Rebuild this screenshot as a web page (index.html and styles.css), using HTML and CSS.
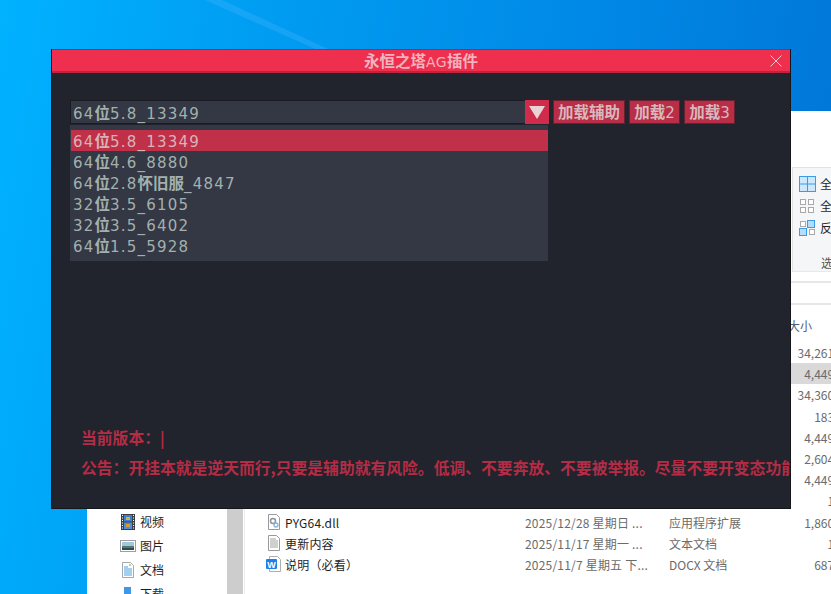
FILE: index.html
```html
<!DOCTYPE html>
<html lang="zh-CN">
<head>
<meta charset="utf-8">
<title>永恒之塔AG插件</title>
<link rel="stylesheet" href="styles.css">
</head>
<body>
<div class="desktop">
  <svg class="streak" width="831" height="80" viewBox="0 0 831 80"><polygon points="205,0 222,0 395,80 385,80" fill="#4fb8ff" opacity=".28"/></svg>

  <section class="explorer">
    <nav class="nav">
      <div class="nav-row">
        <svg class="ico" width="16" height="16" viewBox="0 0 16 16"><rect x="1" y="0" width="14" height="16" fill="#3b3f46"/><rect x="4" y="1" width="8" height="6.5" fill="#3f7fd0"/><rect x="4" y="8.5" width="8" height="6.5" fill="#4a8fe0"/><rect x="6" y="3" width="4" height="3" fill="#d6b23a"/><rect x="6" y="10" width="4" height="3" fill="#d89a30"/><path d="M2 1.5h1M2 4h1M2 6.5h1M2 9h1M2 11.5h1M2 14h1M13 1.5h1M13 4h1M13 6.5h1M13 9h1M13 11.5h1M13 14h1" stroke="#fff"/></svg>
        <span>视频</span>
      </div>
      <div class="nav-row">
        <svg class="ico" width="16" height="16" viewBox="0 0 16 16"><rect x=".5" y="2.5" width="15" height="11" fill="#fff" stroke="#9a9fa6"/><rect x="2" y="4" width="12" height="4" fill="#a7c4d8"/><rect x="2" y="8" width="12" height="2" fill="#4f7c66"/><rect x="2" y="10" width="12" height="2" fill="#2f4a52"/></svg>
        <span>图片</span>
      </div>
      <div class="nav-row">
        <svg class="ico" width="16" height="16" viewBox="0 0 16 16"><path d="M2.500 .5h8l3 3v12h-11z" fill="#fff" stroke="#a5a9ad"/><path d="M4 5h4M4 7h8M4 9h8M4 11h8M4 13h8" stroke="#4a9ee0"/><path d="M9 3h2" stroke="#6aa84f"/></svg>
        <span>文档</span>
      </div>
      <div class="nav-row">
        <svg class="ico" width="16" height="16" viewBox="0 0 16 16"><rect x="4" y="1" width="7" height="15" fill="#3f97e8"/></svg>
        <span>下载</span>
      </div>
    </nav>
    <div class="scrollbar"></div>
    <div class="main">
      <div class="ribbon">
        <div class="rib-item">
          <svg class="ico" width="18" height="16" viewBox="0 0 18 16"><rect x=".5" y=".5" width="16" height="15" fill="#cfe7fb" stroke="#3a9be8"/><path d="M8.500 0v16M0 8h17" stroke="#3a9be8"/></svg>
          <span>全部选择</span>
        </div>
        <div class="rib-item">
          <svg class="ico" width="18" height="16" viewBox="0 0 18 16"><g fill="#fff" stroke="#a9a9a9"><rect x="1.500" y="1.500" width="5" height="5"/><rect x="9.500" y="1.500" width="5" height="5"/><rect x="1.500" y="9.500" width="5" height="5"/><rect x="9.500" y="9.500" width="5" height="5"/></g></svg>
          <span>全部取消</span>
        </div>
        <div class="rib-item">
          <svg class="ico" width="18" height="16" viewBox="0 0 18 16"><rect x="1.500" y="1.500" width="5" height="5" fill="#fff" stroke="#a9a9a9"/><rect x="10.500" y="9.500" width="5" height="5" fill="#fff" stroke="#a9a9a9"/><rect x="8.500" y=".5" width="7" height="7" fill="#b5dcfa" stroke="#3a9be8"/><rect x=".5" y="8.500" width="7" height="7" fill="#b5dcfa" stroke="#3a9be8"/></svg>
          <span>反向选择</span>
        </div>
        <div class="rib-label">选择</div>
      </div>
      <div class="rib-gap"></div>
      <div class="col-head"><span class="size-head">大小</span></div>
      <div class="files">
        <div class="file"><span></span><span></span><span></span><span class="size">34,261 KB</span></div>
        <div class="file sel"><span></span><span></span><span></span><span class="size">4,449 KB</span></div>
        <div class="file"><span></span><span></span><span></span><span class="size">34,360 KB</span></div>
        <div class="file"><span></span><span></span><span></span><span class="size">183 KB</span></div>
        <div class="file"><span></span><span></span><span></span><span class="size">4,449 KB</span></div>
        <div class="file"><span></span><span></span><span></span><span class="size">2,604 KB</span></div>
        <div class="file"><span></span><span></span><span></span><span class="size">4,449 KB</span></div>
        <div class="file"><span></span><span></span><span></span><span class="size">1 KB</span></div>
        <div class="file">
          <span class="fname"><svg class="ico" width="16" height="16" viewBox="0 0 16 16"><path d="M2.500 .5h8l3 3v12h-11z" fill="#fff" stroke="#9a9a9a"/><circle cx="7" cy="7" r="2.500" fill="none" stroke="#8a94a0" stroke-width="1.500"/><circle cx="10" cy="11" r="2" fill="none" stroke="#8ab0d0" stroke-width="1.300"/></svg>PYG64.dll</span>
          <span class="date">2025/12/28 星期日 ...</span><span>应用程序扩展</span><span class="size">1,860 KB</span>
        </div>
        <div class="file">
          <span class="fname"><svg class="ico" width="16" height="16" viewBox="0 0 16 16"><path d="M2.500 .5h8l3 3v12h-11z" fill="#fff" stroke="#9a9a9a"/><path d="M4 4h6M4 6h8M4 8h8M4 10h8M4 12h8" stroke="#a0a0a0"/></svg>更新内容</span>
          <span class="date">2025/11/17 星期一 ...</span><span>文本文档</span><span class="size">1 KB</span>
        </div>
        <div class="file">
          <span class="fname"><svg class="ico" width="16" height="16" viewBox="0 0 16 16"><path d="M3.500 .5h8l3 3v12h-11z" fill="#fff" stroke="#a8b0b8"/><rect x="0" y="3" width="11" height="10" rx="1" fill="#1f7fe8"/><text x="5.500" y="11.500" class="w-mark">W</text></svg>说明（必看）</span>
          <span class="date">2025/11/7 星期五 下...</span><span>DOCX 文档</span><span class="size">687 KB</span>
        </div>
      </div>
    </div>
  </section>

  <section class="app">
    <header class="titlebar">
      <h1 class="title"><b>永恒之塔</b>AG<b>插件</b></h1>
      <svg class="close" width="12" height="12" viewBox="0 0 12 12"><path d="M.5.5l11 11M11.500.5l-11 11" stroke="#f3c9d0" fill="none"/></svg>
    </header>
    <div class="content">
      <div class="toolbar">
        <div class="combo">
          <div class="combo-value">64<b>位</b>5.8_13349</div>
          <div class="combo-arrow"><span class="tri"></span></div>
        </div>
        <button class="btn btn-wide"><b>加载辅助</b></button>
        <button class="btn"><b>加载</b>2</button>
        <button class="btn"><b>加载</b>3</button>
      </div>
      <ul class="list">
        <li class="item active">64<b>位</b>5.8_13349</li>
        <li class="item">64<b>位</b>4.6_8880</li>
        <li class="item">64<b>位</b>2.8<b>怀旧服</b>_4847</li>
        <li class="item">32<b>位</b>3.5_6105</li>
        <li class="item">32<b>位</b>3.5_6402</li>
        <li class="item">64<b>位</b>1.5_5928</li>
      </ul>
      <div class="notes">
        <p class="note">当前版本：|</p>
        <p class="note">公告：开挂本就是逆天而行,只要是辅助就有风险。低调、不要奔放、不要被举报。尽量不要开变态功能</p>
      </div>
    </div>
  </section>
</div>
</body>
</html>
```
FILE: styles.css
```css
* { box-sizing: border-box; }
html, body { margin: 0; padding: 0; width: 831px; height: 594px; overflow: hidden; }
.desktop {
  position: relative;
  width: 831px;
  height: 594px;
  overflow: hidden;
  background: linear-gradient(100deg, #00b2ff 0%, #009cf2 30%, #0088e6 65%, #0072d4 100%);
  font-family: "Noto Sans CJK SC", "Noto Sans", sans-serif;
}
.streak { position: absolute; left: 0; top: 0; }

/* Explorer behind */
.explorer {
  position: absolute;
  left: 87px;
  top: 111px;
  width: 800px;
  height: 483px;
  background: #fff;
  display: flex;
  font-size: 12px;
  color: #1e1e1e;
}
.ico { flex: none; display: block; }
.nav {
  width: 140px;
  flex: none;
  padding: 399px 0 0 33px;
  display: flex;
  flex-direction: column;
}
.nav-row { height: 24px; flex: none; display: flex; align-items: center; gap: 4px; line-height: 24px; }
.scrollbar { width: 16px; flex: none; background: #cdcdcd; margin-top: 380px; }
.main { width: 620px; margin-left: 1px; border-left: 1px solid #ececec; flex: none; padding-top: 56px; }
.ribbon {
  height: 105px;
  background: #f5f6f7;
  border-top: 1px solid #e2e2e2;
  border-bottom: 1px solid #e8e8e8;
  border-left: 1px solid #e2e2e2;
  margin-left: 547px;
  padding: 7px 0 0 6px;
  display: flex;
  flex-direction: column;
  gap: 4px;
}
.rib-item { display: flex; align-items: center; gap: 3px; height: 18px; white-space: nowrap; line-height: 18px; }
.rib-label { margin: 13px 0 0 22px; color: #555; line-height: 18px; white-space: nowrap; }
.rib-gap { height: 11px; border-bottom: 2px solid #e6e6e6; }
.col-head {
  margin-top: 20px;
  border-top: 2px solid #e6e6e6;
  height: 34px;
  padding: 11px 0 0 543px;
}
.size-head { display: block; color: #4c607a; line-height: 20px; white-space: nowrap; }
.files { margin-top: 5px; }
.file {
  display: grid;
  grid-template-columns: 259px 144px 100px 83.500px;
  padding-left: 21px;
  height: 21.2px;
  line-height: 21px;
  color: #6b6b6b;
  white-space: nowrap;
}
.file.sel { background: #d9d9d9; }
.fname { display: flex; align-items: center; gap: 3px; color: #1e1e1e; letter-spacing: .2px; }
.date { letter-spacing: .2px; }
.size { text-align: right; }
.w-mark { font: 700 9px "Liberation Sans", sans-serif; fill: #fff; text-anchor: middle; }

/* Plugin window */
.app {
  position: absolute;
  left: 51px;
  top: 49px;
  width: 740px;
  height: 460px;
  background: #21242c;
  border: 1px solid #14161b;
  border-top: 0;
  display: flex;
  flex-direction: column;
  overflow: hidden;
  font-family: "DejaVu Sans", "Noto Sans CJK SC", sans-serif;
}
.app b { font-family: "Noto Sans CJK SC", sans-serif; font-weight: 700; letter-spacing: 0; }
.titlebar {
  flex: none;
  position: relative;
  height: 24px;
  margin: 0 -1px;
  background: #ee2f4d;
  border: 1px solid #c01f3c;
  border-bottom: 2px solid #c4213f;
  display: flex;
  align-items: center;
  justify-content: center;
}
.title { margin: 0; font-size: 14px; font-weight: 400; letter-spacing: .5px; color: #f0b4be; line-height: 20px; white-space: nowrap; }
.app .title b { font-size: 15.500px; }
.close { position: absolute; right: 8px; top: 5px; }
.content { flex: 1; display: flex; flex-direction: column; padding: 27px 0 0 18px; min-height: 0; }
.toolbar { display: flex; gap: 4px; height: 24px; }
.combo { display: flex; width: 479px; border: 1px solid #191b21; background: #333844; height: 24px; }
.combo-value, .item {
  font-size: 15px;
  letter-spacing: 1.200px;
  color: #a3b0ad;
  white-space: nowrap;
  padding-left: 2px;
  line-height: 22px;
}
.combo-value { flex: 1; }
.app .combo-value b, .app .item b { font-size: 15.500px; }
.combo-arrow {
  width: 24px;
  margin: -1px -1px -1px 0;
  background: #cf2c4c;
  display: flex;
  align-items: center;
  justify-content: center;
}
.tri { width: 0; height: 0; border-left: 8px solid transparent; border-right: 8px solid transparent; border-top: 13px solid #e9d3d6; }
.btn {
  width: 51px;
  height: 24px;
  padding: 0;
  background: #b92d47;
  border: 1px solid #66202f;
  color: #d8b8bc;
  font: 15px/20px "DejaVu Sans", sans-serif;
  white-space: nowrap;
}
.btn-wide { width: 72px; }
.app .btn b { font-size: 15.500px; }
.list {
  list-style: none;
  margin: 1px 0 0;
  padding: 5px 0 10px 1px;
  width: 478px;
  height: 136px;
  background: #333844;
}
.item { height: 21px; line-height: 21px; padding-left: 2px; }
.item.active { background: #c03048; color: #d9b3ba; }
.notes { margin-top: auto; padding: 0 0 29px 11px; display: flex; flex-direction: column; gap: 8px; }
.note {
  margin: 0;
  font: 700 15.800px/22px "Noto Sans CJK SC", sans-serif;
  color: #b42c45;
  white-space: nowrap;
}
```
